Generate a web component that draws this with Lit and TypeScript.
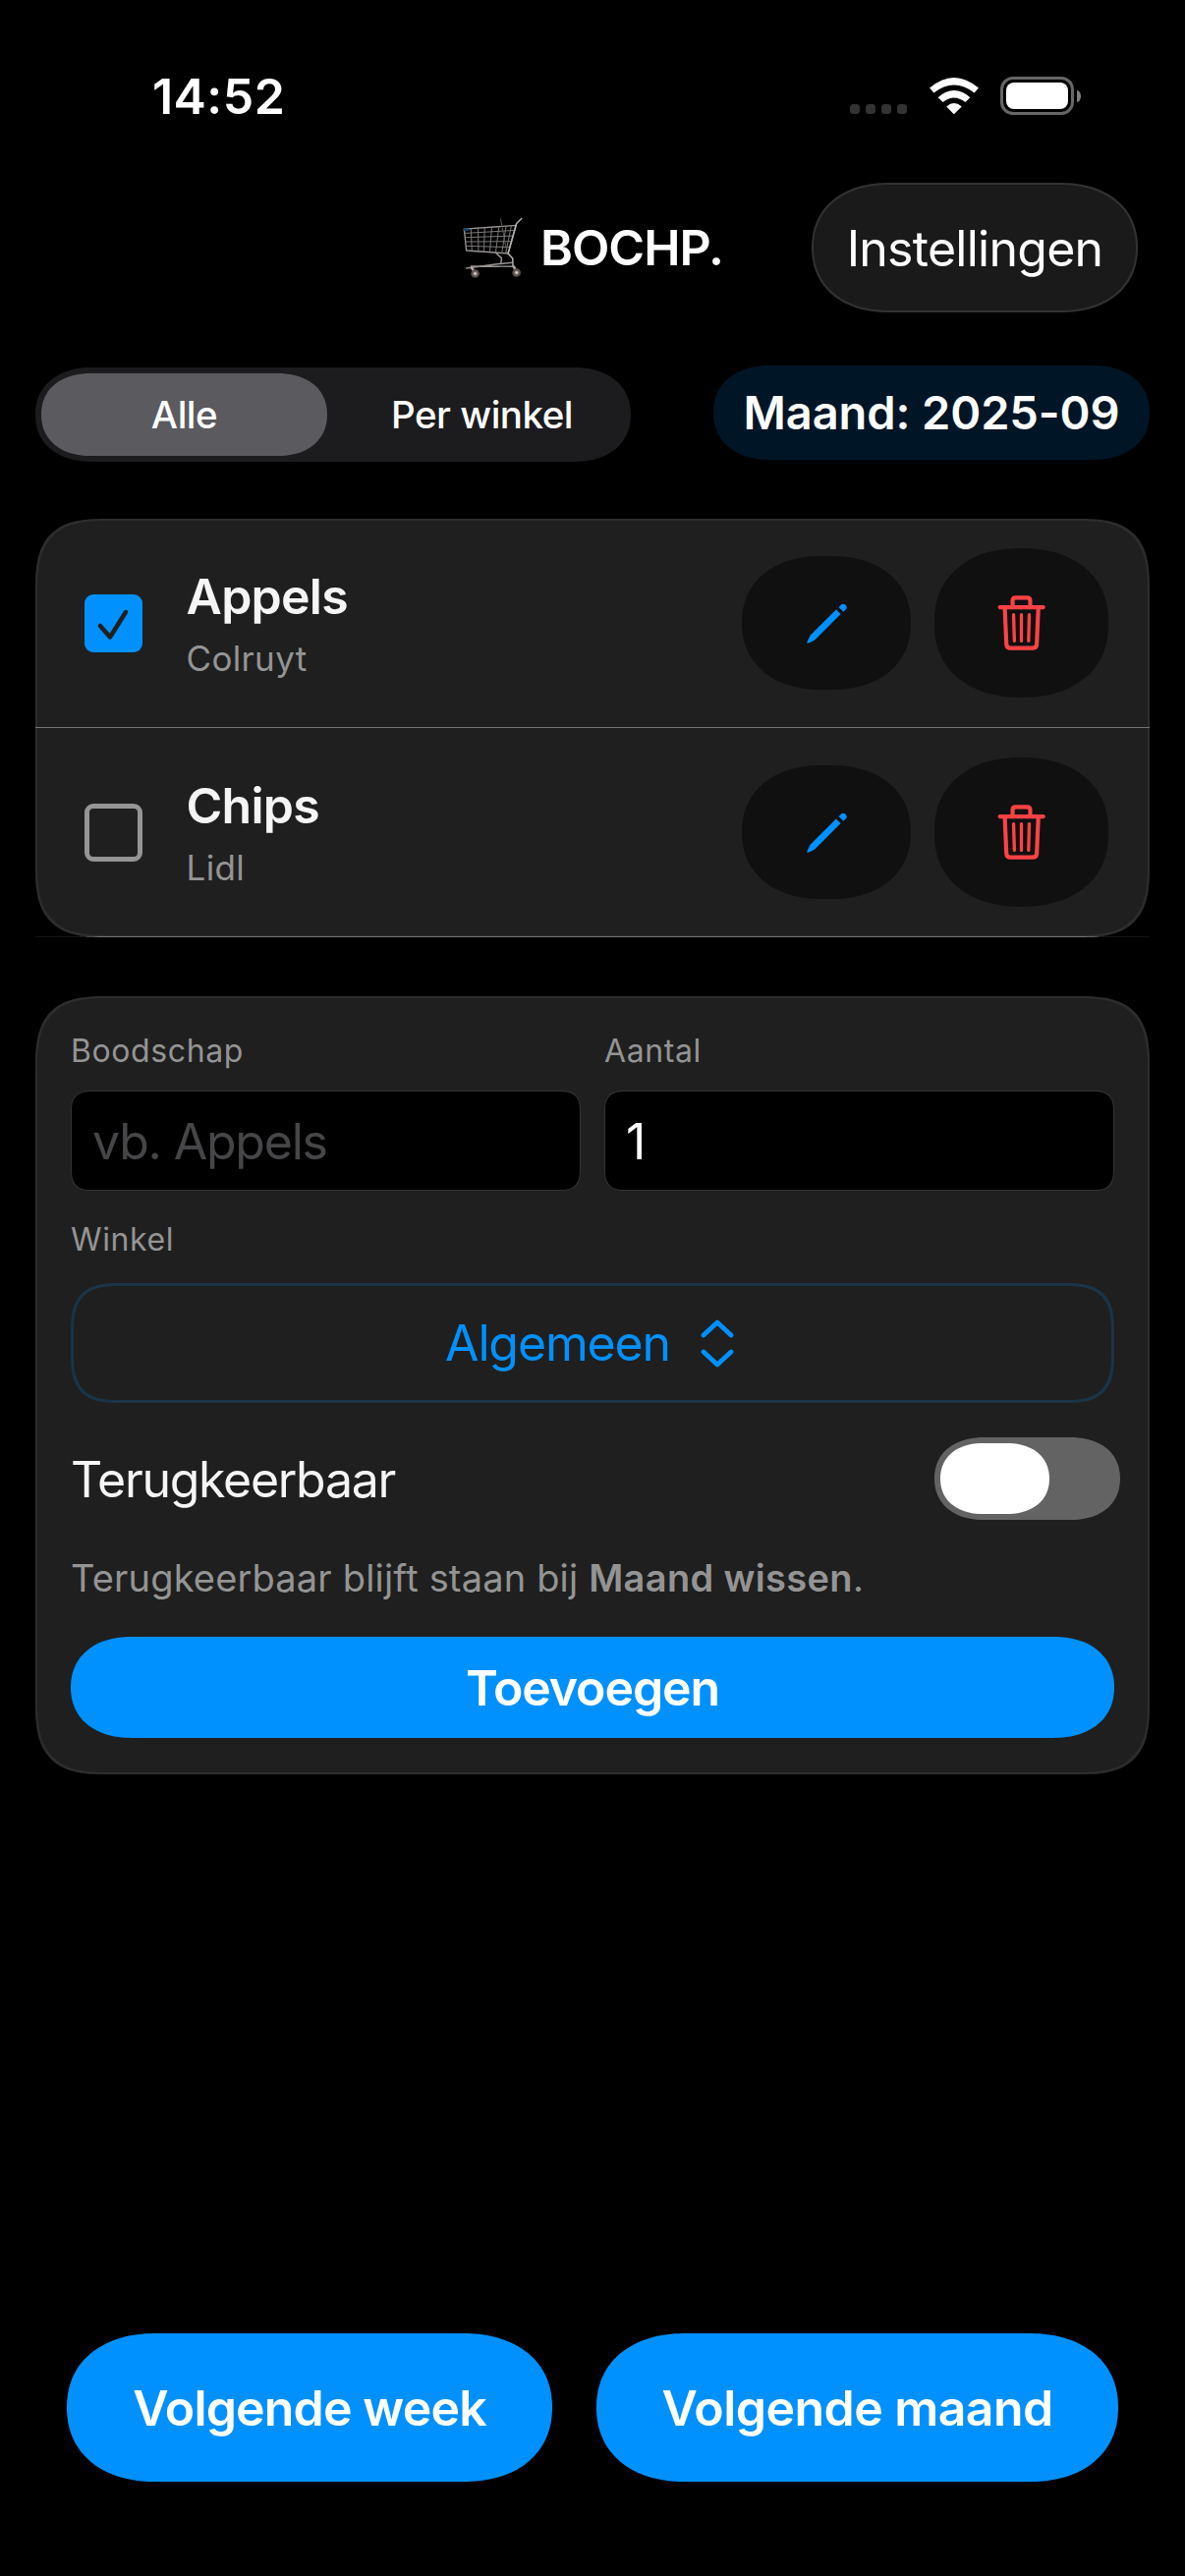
import { LitElement, html, css, svg } from "lit";
import { customElement, state } from "lit/decorators.js";

interface Item {
  name: string;
  store: string;
  done: boolean;
}

const cart = svg`
  <svg class="cart" viewBox="90 90 190 195" fill="none" stroke-linecap="round" stroke-linejoin="round">
    <path d="M97 129L256 118L232 204L104 195Z" stroke="#9a9795" stroke-width="4"/>
    <path d="M99 142L252 133M100 155L248 150M101 168L244 167M102 181L240 185M118 128L121 196M140 126L141 197M160 125L158 199M182 123L176 200M204 122L194 201M226 120L213 202M242 119L225 202" stroke="#7c7a79" stroke-width="3"/>
    <path d="M209 98L214 124L228 200" stroke="#5a5857" stroke-width="3"/>
    <path d="M273 97L258 112L232 204L246 219L247 243" stroke="#b5b2b0" stroke-width="4.500"/>
    <path d="M195 203L212 218L210 235L104 249M118 243L248 244M210 236L246 232" stroke="#959290" stroke-width="4.500"/>
    <path d="M97 131H111" stroke="#12405f" stroke-width="7"/>
    <path d="M120 248L130 262M250 245L257 260" stroke="#b0a7a3" stroke-width="8"/>
    <circle cx="131" cy="266" r="10" fill="#8a7f7b" stroke="#5a504d" stroke-width="6"/>
    <circle cx="258" cy="263" r="10" fill="#8a7f7b" stroke="#5a504d" stroke-width="6"/>
    <circle cx="131" cy="266" r="4" fill="#d8d0cc"/>
    <circle cx="258" cy="263" r="4" fill="#d8d0cc"/>
  </svg>`;

const wifi = svg`
  <svg class="wifi" viewBox="346 86 151 112" fill="#fff">
    <path d="M346 118Q421 54 497 118L484 133Q421 84 359 133Z"/>
    <path d="M372 147Q421 104 471 147L456 162Q421 134 387 162Z"/>
    <path d="M398 175Q421 154 445 175L421 199Z"/>
  </svg>`;

const pencil = svg`
  <svg class="pencil" viewBox="62 56 122 122" fill="#0091ff">
    <path d="M151 75L165 89L88 166Q82 171 66 177Q62 178 63 174Q69 160 74 152Z"/>
    <path d="M159 68L167 60Q172 56 178 60Q186 66 182 73L173 82Z"/>
  </svg>`;

const trash = svg`
  <svg class="trash" viewBox="644 33 146 169" fill="none" stroke="#ff4245" stroke-linecap="round" stroke-linejoin="round">
    <path d="M651 69.500H784" stroke-width="12.500"/>
    <path d="M690 66V49Q690 40 700 40H734Q744 40 744 49V66" stroke-width="12.500"/>
    <path d="M666 72L671 184Q672 195 684 195H751Q763 195 764 184L769 72" stroke-width="12.500"/>
    <path d="M693 92L695.500 173M717 92V173M741 92L739 173" stroke-width="10"/>
  </svg>`;

const tick = svg`
  <svg viewBox="0 0 59 59" fill="none" stroke="#1f1f1f" stroke-width="4.500" stroke-linecap="round" stroke-linejoin="round">
    <path d="M16 32L26 43.500L42 18"/>
  </svg>`;

const chevrons = svg`
  <svg class="chevrons" viewBox="0 0 34 49" fill="none" stroke="#0091ff" stroke-width="4.800" stroke-linecap="round" stroke-linejoin="round">
    <path d="M3 16L17 3L31 16M3 33L17 46L31 33"/>
  </svg>`;

@customElement("app-root")
export class AppRoot extends LitElement {
  @state() private items: Item[] = [
    { name: "Appels", store: "Colruyt", done: true },
    { name: "Chips", store: "Lidl", done: false },
  ];

  static styles = css`
    :host {
      display: block;
      font-family: Inter, "Liberation Sans", sans-serif;
      color: #fff;
    }
    .screen {
      box-sizing: border-box;
      width: 1206px;
      height: 2622px;
      background: #000;
      display: flex;
      flex-direction: column;
      overflow: hidden;
      font-size: 50px;
      white-space: nowrap;
    }
    svg { display: block; flex: none; }
    .cart { width: 63px; height: 65px; }
    .wifi { width: 50px; height: 37px; }
    .pencil { width: 41px; height: 41px; }
    .trash { width: 49px; height: 56px; }

    /* Capsules with continuous corners; --h is the capsule height. */
    .capsule {
      box-sizing: border-box;
      height: var(--h);
      border-radius: calc(var(--h) * 0.6) / calc(var(--h) * 0.5);
      corner-shape: superellipse(1.14);
      display: flex;
      align-items: center;
      justify-content: center;
    }

    .status {
      box-sizing: border-box;
      height: 186px;
      padding: 77px 106px 0 155px;
      display: flex;
      justify-content: space-between;
      align-items: flex-start;
    }
    .time { font-weight: 600; line-height: 42px; letter-spacing: 0.45px; }
    .indicators { display: flex; align-items: center; height: 41px; }
    .dots { display: flex; gap: 6px; align-self: flex-end; margin: 0 23px 2px 0; }
    .dot { width: 10px; height: 10px; border-radius: 3.5px; background: #333; }
    .battery {
      box-sizing: border-box;
      width: 75px;
      height: 39px;
      margin-left: 22px;
      padding: 3px;
      border: 3px solid #666;
      border-radius: 13px;
    }
    .charge { height: 100%; border-radius: 8px; background: #fff; }
    .nub { width: 4px; height: 12px; margin-left: 3px; border-radius: 0 4px 4px 0 / 0 6px 6px 0; background: #7f7f7f; }

    .nav {
      height: 132px;
      padding: 0 48px;
      display: grid;
      grid-template-columns: 1fr auto 1fr;
      align-items: center;
    }
    .title { grid-column: 2; display: flex; align-items: center; gap: 17px; font-weight: 600; letter-spacing: -1px; }
    .settings {
      --h: 132px;
      justify-self: end;
      width: 332px;
      padding-top: 2px;
      background: #1a1a1a;
      border: 2px solid #323232;
      letter-spacing: -0.74px;
    }

    .filters { display: flex; justify-content: space-between; padding: 54px 36px 0; }
    .segments {
      --h: 96px;
      width: 606px;
      margin-top: 2px;
      gap: 12px;
      background: #1c1c1e;
      font-size: 38.5px;
      font-weight: 500;
      letter-spacing: -0.5px;
    }
    .segment { --h: 84px; width: 291px; }
    .segment.on { background: #5b5a5f; }
    .month {
      --h: 96px;
      width: 444px;
      padding-bottom: 2px;
      background: #001526;
      font-size: 47px;
      font-weight: 600;
      letter-spacing: -0.1px;
    }

    .card {
      background: #1f1f1f;
      border-radius: 75px;
      corner-shape: superellipse(1.55);
      box-shadow: inset 0 0 0 2px #2d2d2d;
    }
    .list-area {
      margin: 58px 36px 0;
      background: linear-gradient(#161616, #161616) bottom / 100% 1px no-repeat;
    }
    .list { overflow: hidden; }
    .row {
      box-sizing: border-box;
      height: 213px;
      display: flex;
      align-items: center;
      padding: 0 42px 0 50px;
      border-bottom: 1px solid #757575;
    }
    .check { box-sizing: border-box; width: 59px; height: 59px; border-radius: 9px; border: 5px solid #959595; }
    .check.on { background: #0091ff; border: none; }
    .check svg { width: 59px; height: 59px; }
    .names { flex: 1; padding: 7px 0 0 44.5px; }
    .name { font-weight: 600; color: #f5f5f5; line-height: 64px; letter-spacing: -0.75px; }
    .store { font-size: 35px; color: #949494; line-height: 62px; letter-spacing: 0.35px; }
    .action { --h: 136px; width: 172px; background: #101010; }
    .action.remove { --h: 152px; width: 177px; margin-left: 24px; }

    .form {
      box-sizing: border-box;
      height: 792px;
      margin: 60px 36px 0;
      padding: 36px;
      display: flex;
      flex-direction: column;
    }
    .fields { display: grid; grid-template-columns: 1fr 1fr; gap: 24px; margin-bottom: 30px; }
    .label { font-size: 32px; color: #949494; line-height: 40px; letter-spacing: 0.6px; }
    .input {
      box-sizing: border-box;
      height: 102px;
      margin-top: 20px;
      padding: 2px 0 0 21px;
      display: flex;
      align-items: center;
      background: #000;
      border: 1px solid #333;
      border-radius: 22px;
      corner-shape: superellipse(1.5);
    }
    .placeholder { color: #464649; letter-spacing: -1.2px; }
    .picker {
      box-sizing: border-box;
      height: 122px;
      margin-top: 24px;
      padding-right: 6px;
      display: flex;
      align-items: center;
      justify-content: center;
      gap: 31px;
      border: 3px solid #1a3448;
      border-radius: 50px;
      corner-shape: superellipse(1.5);
      color: #0091ff;
      letter-spacing: -1.15px;
    }
    .chevrons { width: 34px; height: 49px; }
    .toggle-row {
      display: flex;
      justify-content: space-between;
      align-items: center;
      margin: 35px -6px 0 0;
      height: 84px;
      color: #f5f5f5;
      letter-spacing: -1.3px;
    }
    .toggle-label { padding-top: 2px; }
    .toggle { --h: 84px; width: 189px; padding: 6px; justify-content: flex-start; background: #636363; }
    .knob { --h: 72px; width: 111px; background: #fff; }
    .note { font-size: 38px; line-height: 50px; margin-top: 34px; color: #949494; letter-spacing: 0.17px; }
    .note b { font-weight: 600; letter-spacing: 0.35px; }
    .add { --h: 103px; margin-top: 35px; background: #0091ff; font-weight: 600; letter-spacing: -1.1px; }

    .footer { margin-top: auto; padding: 0 68px 96px; display: flex; justify-content: space-between; font-weight: 600; }
    .big { --h: 151px; background: #0091ff; }
    .week { width: 494px; letter-spacing: -0.85px; }
    .next-month { width: 531px; letter-spacing: -0.56px; }
  `;

  private row(i: Item) {
    return html`<div class="row">
      <div class="check ${i.done ? "on" : ""}">${i.done ? tick : ""}</div>
      <div class="names">
        <div class="name">${i.name}</div>
        <div class="store">${i.store}</div>
      </div>
      <div class="capsule action">${pencil}</div>
      <div class="capsule action remove">${trash}</div>
    </div>`;
  }

  render() {
    return html`<div class="screen">
      <div class="status">
        <div class="time">14:52</div>
        <div class="indicators">
          <div class="dots">${[0, 1, 2, 3].map(() => html`<div class="dot"></div>`)}</div>
          ${wifi}
          <div class="battery"><div class="charge"></div></div>
          <div class="nub"></div>
        </div>
      </div>
      <div class="nav">
        <div class="title">${cart}<span>BOCHP.</span></div>
        <div class="capsule settings">Instellingen</div>
      </div>
      <div class="filters">
        <div class="capsule segments">
          <div class="capsule segment on">Alle</div>
          <div class="capsule segment">Per winkel</div>
        </div>
        <div class="capsule month">Maand: 2025-09</div>
      </div>
      <div class="list-area">
        <div class="card list">${this.items.map((i) => this.row(i))}</div>
      </div>
      <div class="card form">
        <div class="fields">
          <div><div class="label">Boodschap</div><div class="input placeholder">vb. Appels</div></div>
          <div><div class="label">Aantal</div><div class="input">1</div></div>
        </div>
        <div class="label">Winkel</div>
        <div class="picker"><span>Algemeen</span>${chevrons}</div>
        <div class="toggle-row">
          <span class="toggle-label">Terugkeerbaar</span>
          <div class="capsule toggle"><div class="capsule knob"></div></div>
        </div>
        <div class="note">Terugkeerbaar blijft staan bij <b>Maand wissen</b>.</div>
        <div class="capsule add">Toevoegen</div>
      </div>
      <div class="footer">
        <div class="capsule big week">Volgende week</div>
        <div class="capsule big next-month">Volgende maand</div>
      </div>
    </div>`;
  }
}
